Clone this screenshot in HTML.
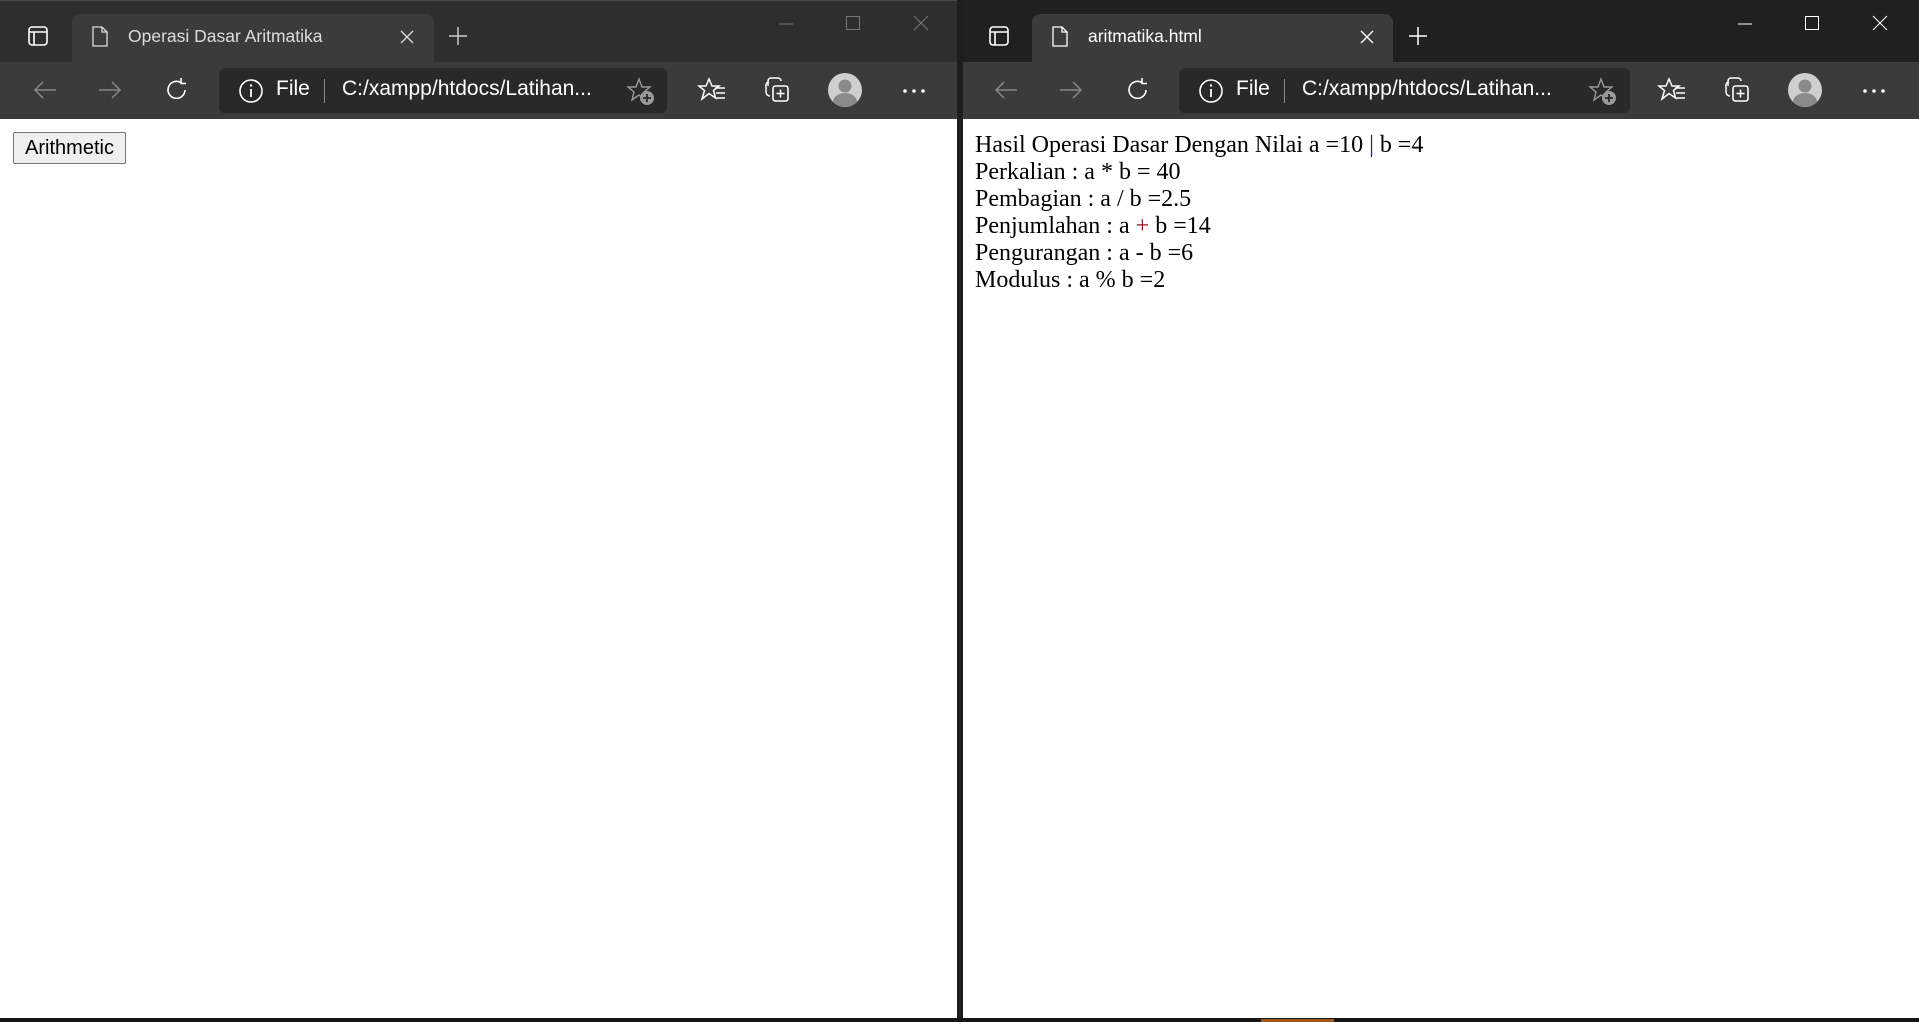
<!DOCTYPE html>
<html><head><meta charset="utf-8"><style>
*{margin:0;padding:0;box-sizing:border-box}
body{width:1919px;height:1022px;background:#1c1c1c;position:relative;overflow:hidden;font-family:"Liberation Sans",sans-serif}
.win{position:absolute;top:0;height:1018px;overflow:hidden}
.strip{position:absolute;left:0;right:0;top:0;height:62px}
.tab{position:absolute;top:14px;height:48px;background:#3b3b3b;border-radius:8px 8px 0 0}
.tb{position:absolute;left:0;right:0;top:62px;height:57px;background:#3b3b3b}
.addr{position:absolute;top:6px;height:45px;background:#292929;border-radius:6px}
.content{position:absolute;left:0;right:0;top:119px;bottom:0;background:#fff}
svg{position:absolute;overflow:visible}
.t{position:absolute;color:#fff;white-space:nowrap}
</style></head><body>

<!-- LEFT WINDOW -->
<div class="win" style="left:0;width:957px">
 <div class="strip" style="background:#2e2e2e;border-top:1px solid #4a4a4a"></div>
 <svg style="left:28px;top:26px" width="20" height="20"><rect x="1" y="1" width="18" height="18" rx="3" fill="none" stroke="#fff" stroke-width="1.6"/><path d="M1 6H19M6 6V19" stroke="#fff" stroke-width="1.6" fill="none"/></svg>
 <div class="tab" style="left:72px;width:362px"></div>
 <svg style="left:92px;top:26px" width="16" height="21"><path d="M1 1H10L15 6V20H1Z M10 1V6H15" fill="none" stroke="#ddd" stroke-width="1.3"/></svg>
 <div class="t" style="left:128px;top:26px;font-size:17.5px;color:#ddd">Operasi Dasar Aritmatika</div>
 <svg style="left:401px;top:31px" width="12" height="12"><path d="M0 0L12 12M12 0L0 12" stroke="#ddd" stroke-width="1.3"/></svg>
 <svg style="left:449px;top:27px" width="18" height="18"><path d="M9 0V18M0 9H18" stroke="#ccc" stroke-width="1.5"/></svg>
 <svg style="left:779px;top:23px" width="14" height="2"><path d="M0 1H14" stroke="#777" stroke-width="1"/></svg>
 <svg style="left:846px;top:16px" width="14" height="14"><rect x=".5" y=".5" width="13" height="13" fill="none" stroke="#777"/></svg>
 <svg style="left:914px;top:16px" width="14" height="14"><path d="M0 0L14 14M14 0L0 14" stroke="#777"/></svg>
 <div class="tb">
  <svg style="left:33px;top:18px" width="24" height="20"><path d="M23 10H2M10 2L2 10L10 18" fill="none" stroke="#888" stroke-width="1.5"/></svg>
  <svg style="left:98px;top:18px" width="24" height="20"><path d="M1 10H22M14 2L22 10L14 18" fill="none" stroke="#888" stroke-width="1.5"/></svg>
  <svg style="left:165px;top:16px" width="24" height="24"><path d="M20 12A8.5 8.5 0 1 1 16 4.6" fill="none" stroke="#fff" stroke-width="1.6"/><path d="M16 0V5.5H21" fill="none" stroke="#fff" stroke-width="1.6"/></svg>
  <div class="addr" style="left:219px;width:448px">
   <svg style="left:20px;top:11px" width="24" height="24"><circle cx="12" cy="12" r="11" fill="none" stroke="#fff" stroke-width="1.6"/><path d="M12 10V18" stroke="#fff" stroke-width="1.8"/><circle cx="12" cy="6.5" r="1.2" fill="#fff"/></svg>
   <div class="t" style="left:57px;top:9px;font-size:21px">File</div>
   <div style="position:absolute;left:105px;top:11px;width:1px;height:24px;background:#888"></div>
   <div class="t" style="left:123px;top:9px;font-size:21px">C:/xampp/htdocs/Latihan...</div>
   <svg style="left:408px;top:10px" width="28" height="28"><path d="M12 1L15 9H23L17 14L19 22L12 17L5 22L7 14L1 9H9Z" fill="none" stroke="#999" stroke-width="1.4"/><circle cx="20" cy="20" r="7" fill="#999"/><path d="M20 16V24M16 20H24" stroke="#292929" stroke-width="1.8"/></svg>
  </div>
  <svg style="left:698px;top:16px" width="28" height="24"><path d="M11 1L14 8H21L15.5 12.5L17.5 20L11 15.5L4 21L6.5 12.5L1 8H8Z" fill="none" stroke="#fff" stroke-width="1.5"/><path d="M17 10H27M18 15H27M18 20H27" stroke="#fff" stroke-width="1.5"/></svg>
  <svg style="left:764px;top:14px" width="28" height="28"><path d="M4 10V5A3 3 0 0 1 7 2H14A3 3 0 0 1 17 5" fill="none" stroke="#fff" stroke-width="1.5"/><path d="M6 20A4 4 0 0 1 2 16V9A3 3 0 0 1 5 6" fill="none" stroke="#fff" stroke-width="1.5"/><rect x="9" y="10" width="15" height="15" rx="2.5" fill="none" stroke="#fff" stroke-width="1.6"/><path d="M16.5 13.5V21.5M12.5 17.5H20.5" stroke="#fff" stroke-width="1.6"/></svg>
  <svg style="left:828px;top:11px" width="34" height="34"><circle cx="17" cy="17" r="17" fill="#cfcfcf"/><circle cx="17" cy="13" r="6.5" fill="#8a8a8a"/><path d="M5 29A12 9 0 0 1 29 29A17 17 0 0 1 5 29Z" fill="#8a8a8a"/></svg>
  <svg style="left:903px;top:27px" width="22" height="4"><circle cx="2" cy="2" r="1.8" fill="#fff"/><circle cx="11" cy="2" r="1.8" fill="#fff"/><circle cx="20" cy="2" r="1.8" fill="#fff"/></svg>
 </div>
 <div class="content">
  <div style="position:absolute;left:13px;top:13px;width:113px;height:32px;background:#efefef;border:1px solid #767676;border-radius:2px;font-size:20px;line-height:30px;text-align:center;color:#000">Arithmetic</div>
 </div>
</div>

<div style="position:absolute;left:957px;top:0;width:6px;height:1022px;background:#1e1e1e"></div>

<!-- RIGHT WINDOW -->
<div class="win" style="left:963px;width:956px">
 <div class="strip" style="background:#202020"></div>
 <svg style="left:26px;top:26px" width="20" height="20"><rect x="1" y="1" width="18" height="18" rx="3" fill="none" stroke="#fff" stroke-width="1.6"/><path d="M1 6H19M6 6V19" stroke="#fff" stroke-width="1.6" fill="none"/></svg>
 <div class="tab" style="left:69px;width:361px"></div>
 <svg style="left:89px;top:26px" width="16" height="21"><path d="M1 1H10L15 6V20H1Z M10 1V6H15" fill="none" stroke="#fff" stroke-width="1.3"/></svg>
 <div class="t" style="left:125px;top:26px;font-size:17.5px">aritmatika.html</div>
 <svg style="left:398px;top:31px" width="12" height="12"><path d="M0 0L12 12M12 0L0 12" stroke="#fff" stroke-width="1.3"/></svg>
 <svg style="left:446px;top:27px" width="18" height="18"><path d="M9 0V18M0 9H18" stroke="#fff" stroke-width="1.5"/></svg>
 <svg style="left:775px;top:23px" width="14" height="2"><path d="M0 1H14" stroke="#fff" stroke-width="1"/></svg>
 <svg style="left:842px;top:16px" width="14" height="14"><rect x=".5" y=".5" width="13" height="13" fill="none" stroke="#fff"/></svg>
 <svg style="left:910px;top:16px" width="14" height="14"><path d="M0 0L14 14M14 0L0 14" stroke="#fff"/></svg>
 <div class="tb">
  <svg style="left:31px;top:18px" width="24" height="20"><path d="M23 10H2M10 2L2 10L10 18" fill="none" stroke="#888" stroke-width="1.5"/></svg>
  <svg style="left:96px;top:18px" width="24" height="20"><path d="M1 10H22M14 2L22 10L14 18" fill="none" stroke="#888" stroke-width="1.5"/></svg>
  <svg style="left:163px;top:16px" width="24" height="24"><path d="M20 12A8.5 8.5 0 1 1 16 4.6" fill="none" stroke="#fff" stroke-width="1.6"/><path d="M16 0V5.5H21" fill="none" stroke="#fff" stroke-width="1.6"/></svg>
  <div class="addr" style="left:216px;width:451px">
   <svg style="left:20px;top:11px" width="24" height="24"><circle cx="12" cy="12" r="11" fill="none" stroke="#fff" stroke-width="1.6"/><path d="M12 10V18" stroke="#fff" stroke-width="1.8"/><circle cx="12" cy="6.5" r="1.2" fill="#fff"/></svg>
   <div class="t" style="left:57px;top:9px;font-size:21px">File</div>
   <div style="position:absolute;left:105px;top:11px;width:1px;height:24px;background:#888"></div>
   <div class="t" style="left:123px;top:9px;font-size:21px">C:/xampp/htdocs/Latihan...</div>
   <svg style="left:410px;top:10px" width="28" height="28"><path d="M12 1L15 9H23L17 14L19 22L12 17L5 22L7 14L1 9H9Z" fill="none" stroke="#999" stroke-width="1.4"/><circle cx="20" cy="20" r="7" fill="#999"/><path d="M20 16V24M16 20H24" stroke="#292929" stroke-width="1.8"/></svg>
  </div>
  <svg style="left:695px;top:16px" width="28" height="24"><path d="M11 1L14 8H21L15.5 12.5L17.5 20L11 15.5L4 21L6.5 12.5L1 8H8Z" fill="none" stroke="#fff" stroke-width="1.5"/><path d="M17 10H27M18 15H27M18 20H27" stroke="#fff" stroke-width="1.5"/></svg>
  <svg style="left:761px;top:14px" width="28" height="28"><path d="M4 10V5A3 3 0 0 1 7 2H14A3 3 0 0 1 17 5" fill="none" stroke="#fff" stroke-width="1.5"/><path d="M6 20A4 4 0 0 1 2 16V9A3 3 0 0 1 5 6" fill="none" stroke="#fff" stroke-width="1.5"/><rect x="9" y="10" width="15" height="15" rx="2.5" fill="none" stroke="#fff" stroke-width="1.6"/><path d="M16.5 13.5V21.5M12.5 17.5H20.5" stroke="#fff" stroke-width="1.6"/></svg>
  <svg style="left:825px;top:11px" width="34" height="34"><circle cx="17" cy="17" r="17" fill="#cfcfcf"/><circle cx="17" cy="13" r="6.5" fill="#8a8a8a"/><path d="M5 29A12 9 0 0 1 29 29A17 17 0 0 1 5 29Z" fill="#8a8a8a"/></svg>
  <svg style="left:900px;top:27px" width="22" height="4"><circle cx="2" cy="2" r="1.8" fill="#fff"/><circle cx="11" cy="2" r="1.8" fill="#fff"/><circle cx="20" cy="2" r="1.8" fill="#fff"/></svg>
 </div>
 <div class="content" style="font-family:'Liberation Serif',serif;font-size:24px;line-height:27px;color:#000">
  <div style="position:absolute;left:12px;top:13px;white-space:nowrap">
   Hasil Operasi Dasar Dengan Nilai a =10 <span style="color:#1a237e">|</span> b =4<br>
   Perkalian : a * b = 40<br>
   Pembagian : a / b =2.5<br>
   Penjumlahan : a <span style="color:#8b1a1a">+</span> b =14<br>
   Pengurangan : a - b =6<br>
   Modulus : a % b =2
  </div>
 </div>
</div>

<div style="position:absolute;left:0;top:1018px;width:1919px;height:4px;background:#161616"></div>
<div style="position:absolute;left:1261px;top:1019px;width:73px;height:3px;background:#a0561c"></div>
</body></html>
